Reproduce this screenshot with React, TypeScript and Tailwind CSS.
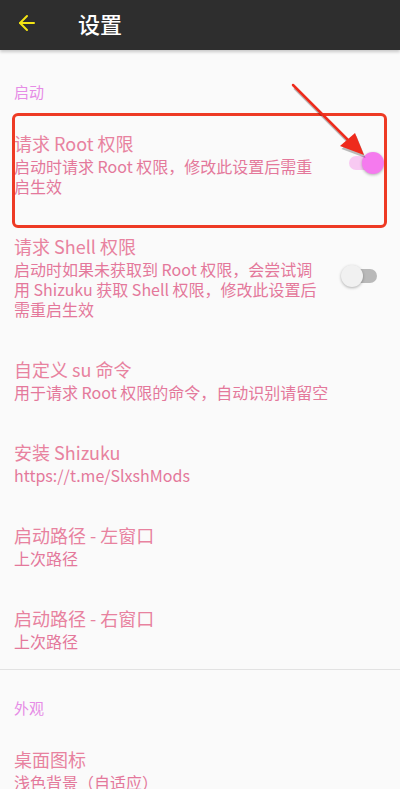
import { ArrowLeft } from 'lucide-react';

type Item = {
  title: string;
  summary: string;
  toggle?: 'on' | 'off';
};

const startItems: Item[] = [
  {
    title: '请求 Root 权限',
    summary: '启动时请求 Root 权限，修改此设置后需重启生效',
    toggle: 'on',
  },
  {
    title: '请求 Shell 权限',
    summary: '启动时如果未获取到 Root 权限，会尝试调用 Shizuku 获取 Shell 权限，修改此设置后需重启生效',
    toggle: 'off',
  },
  { title: '自定义 su 命令', summary: '用于请求 Root 权限的命令，自动识别请留空' },
  { title: '安装 Shizuku', summary: 'https://t.me/SlxshMods' },
  { title: '启动路径 - 左窗口', summary: '上次路径' },
  { title: '启动路径 - 右窗口', summary: '上次路径' },
];

const lookItems: Item[] = [{ title: '桌面图标', summary: '浅色背景（自适应）' }];

function Toggle({ on }: { on: boolean }) {
  if (on) {
    return (
      <div className="relative mr-[17px] h-[14px] w-[34px] shrink-0 rounded-full bg-[#f8c9f2]">
        <div className="absolute right-[-1px] top-[-4px] h-[22px] w-[22px] rounded-full bg-[#f57aee] shadow-[0_1px_3px_rgba(0,0,0,0.3)]" />
      </div>
    );
  }
  return (
    <div className="relative mr-[23px] h-[14px] w-[34px] shrink-0 rounded-full bg-[#b9b9b9]">
      <div className="absolute left-[-2px] top-[-4px] h-[22px] w-[22px] rounded-full bg-[#f1f1f1] shadow-[0_1px_3px_rgba(0,0,0,0.3)]" />
    </div>
  );
}

function PrefRow({ item }: { item: Item }) {
  return (
    <div className="flex items-center pl-[14px] pt-[19px] pb-[18px]">
      <div className={item.toggle ? 'w-[308px]' : 'flex-1 pr-[14px]'}>
        <div className="text-[18px] leading-[26px] text-[#e8829f]">{item.title}</div>
        <div className="text-[16px] leading-[20px] text-[#e4789b]">{item.summary}</div>
      </div>
      {item.toggle && (
        <div className="ml-auto">
          <Toggle on={item.toggle === 'on'} />
        </div>
      )}
    </div>
  );
}

function Category({ label, top }: { label: string; top: string }) {
  return (
    <div className={`pl-[14px] ${top} pb-[9px] text-[15px] leading-[20px] text-[#e68ce6]`}>
      {label}
    </div>
  );
}

export default function App() {
  return (
    <div
      className="relative h-[789px] w-[400px] overflow-hidden bg-[#fafafa]"
      style={{ fontFamily: '"Noto Sans CJK SC", "Noto Sans", sans-serif' }}
    >
      <header className="flex h-[50px] items-center bg-[#2e2e2e] pb-[4px] shadow-[0_2px_3px_rgba(0,0,0,0.2)]">
        <ArrowLeft className="ml-[15px] h-[24px] w-[24px] text-[#f3e313]" strokeWidth={2} />
        <h1 className="ml-[39px] text-[22px] font-medium leading-none text-white">设置</h1>
      </header>
      <div className="h-[2px]" />

      <Category label="启动" top="pt-[30px]" />
      {startItems.map((item, i) => (
        <PrefRow key={i} item={item} />
      ))}

      <div className="h-[1px] bg-[#e2e2e2]" />

      <Category label="外观" top="pt-[28px]" />
      {lookItems.map((item, i) => (
        <PrefRow key={i} item={item} />
      ))}

      {/* annotation: red box + arrow */}
      <div className="pointer-events-none absolute left-[12px] top-[113px] h-[115px] w-[375px] rounded-[6px] border-[3px] border-[#ee3a24]" />
      <svg
        className="pointer-events-none absolute left-0 top-0"
        width="400"
        height="200"
        viewBox="0 0 400 200"
      >
        <g transform="translate(1.5 2)" opacity="0.25">
          <line x1="293" y1="86" x2="352" y2="145" stroke="#000" strokeWidth="3" />
          <polygon points="364,156 340,147 355,134" fill="#000" />
        </g>
        <line x1="293" y1="85" x2="352" y2="144" stroke="#ee2a1c" strokeWidth="2.5" strokeLinecap="round" />
        <polygon points="364,155 340,146 355,133" fill="#ee2a1c" />
      </svg>
    </div>
  );
}
